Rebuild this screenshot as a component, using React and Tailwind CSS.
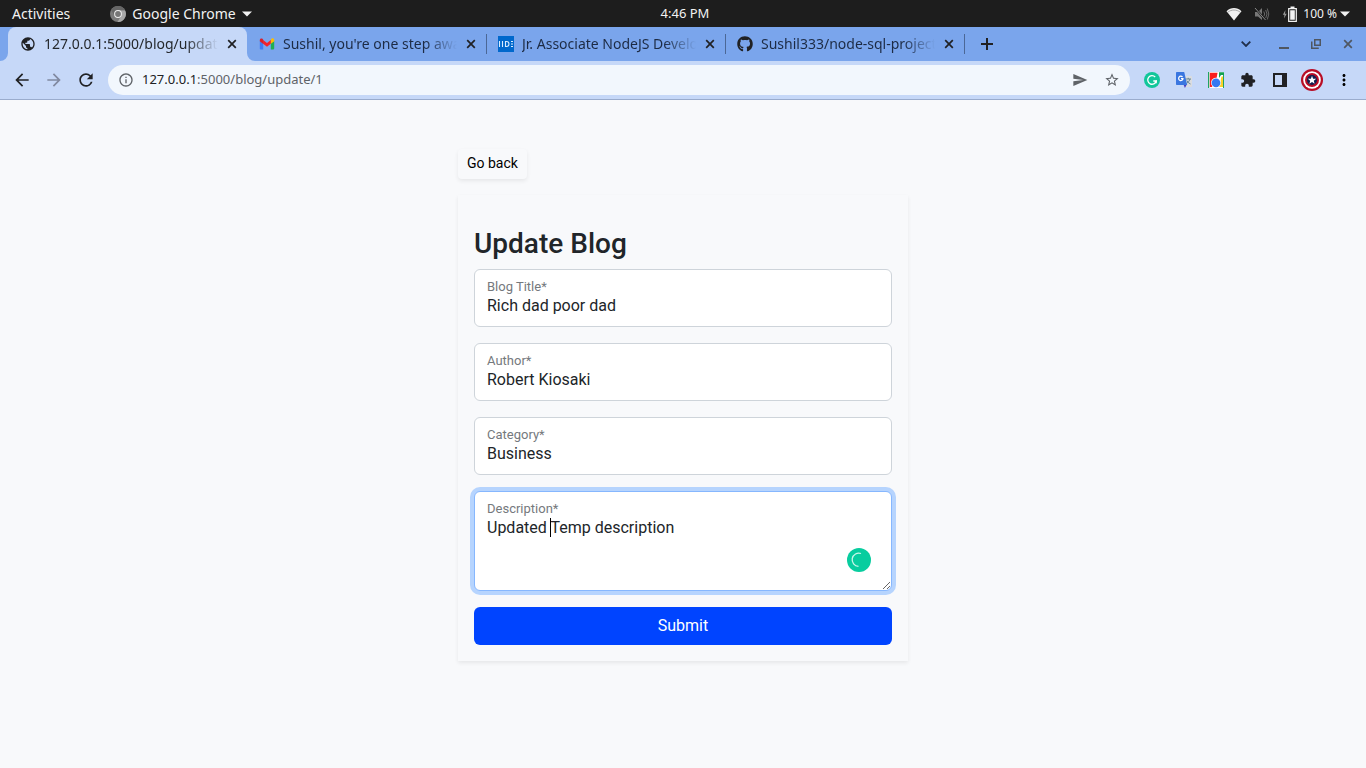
import React from "react";
import {
  MdArrowBack,
  MdArrowForward,
  MdRefresh,
  MdInfoOutline,
  MdSend,
  MdStarBorder,
  MdExtension,
  MdMoreVert,
  MdPublic,
} from "react-icons/md";
import { FaGithub } from "react-icons/fa";

function CloseGlyph({ className }) {
  return (
    <svg viewBox="0 0 10 10" className={className} aria-hidden="true">
      <path d="M1.2 1.2 8.8 8.8M8.8 1.2 1.2 8.8" stroke="currentColor" strokeWidth="1.7" fill="none" />
    </svg>
  );
}

function GmailIcon() {
  return (
    <svg viewBox="0 0 16 16" className="size-4">
      <path d="M.8 5v7.600c0 .5.4.9.900.9h2.500V7z" fill="#3f7cf4" />
      <path d="M11.800 7v6.500h2.500c.5 0 .9-.4.9-.9V5z" fill="#1fae54" />
      <path d="M11.600 4.200v3.700l3.600-2.700V4c0-1.500-1.600-2.200-2.700-1.300z" fill="#fbbc04" />
      <path d="M4.100 7.700V3.900L8 6.900l3.800-3v3.800L8 10.800z" fill="#f2212b" />
      <path d="M.8 4v1.200l3.500 2.700V4l-.8-1.200C2.400 1.900.8 2.500.8 4z" fill="#d9202b" />
    </svg>
  );
}

function IideIcon() {
  return (
    <svg viewBox="0 0 16 16" className="size-4">
      <rect width="16" height="16" fill="#0068cc" />
      <path
        d="M1.500 5v6M4.500 5v6M7.500 5.500v5h1c1.600 0 2.500-1 2.500-2.500s-.9-2.500-2.500-2.500zM13 5.500H15M13 8H15M13 10.500H15"
        stroke="#d9ecff"
        strokeWidth="1.100"
        fill="none"
      />
    </svg>
  );
}

const tabs = [
  { title: "127.0.0.1:5000/blog/update/1", icon: <MdPublic className="size-4" />, active: true },
  { title: "Sushil, you're one step away from", icon: <GmailIcon /> },
  { title: "Jr. Associate NodeJS Developer", icon: <IideIcon /> },
  { title: "Sushil333/node-sql-project-api", icon: <FaGithub className="size-4" /> },
];

function ChromeMark() {
  return (
    <svg viewBox="0 0 16 16" className="size-4">
      <circle cx="8" cy="8" r="8" fill="#7b7b7b" />
      <path d="M8 4.200h6.900A8 8 0 0 1 7.500 16l3.800-6z" fill="#a9a9a9" />
      <path d="M1.100 4A8 8 0 0 1 15 4.200H8L4.600 9.800z" fill="#666" />
      <circle cx="8" cy="8" r="3.900" fill="#f0f0f0" />
      <circle cx="8" cy="8" r="2.900" fill="#777" />
    </svg>
  );
}

function Caret() {
  return (
    <svg viewBox="0 0 10 6" className="h-[6px] w-[10px]">
      <path d="M0 .5h10L5 5.500z" fill="#f2f2f2" />
    </svg>
  );
}

function SystemBar() {
  return (
    <header className="grid h-[27px] grid-cols-[1fr_auto_1fr] items-center bg-[#1d1d1d] text-[13px] text-[#f2f2f2]">
      <div className="flex items-center gap-10 pl-3">
        <button className="text-sm">Activities</button>
        <button className="flex items-center gap-[6px] text-sm">
          <ChromeMark />
          <span>Google Chrome</span>
          <Caret />
        </button>
      </div>
      <time className="pl-1">4:46 PM</time>
      <div className="flex items-center justify-end pr-4">
        <svg viewBox="0 0 16 14" className="mr-3 h-[14px] w-4">
          <path d="M.5 4.200C4.800 0 11.200 0 15.500 4.200L8 13.500z" fill="#f2f2f2" />
          <path d="M1.800 5.200C5.500 2.300 10.500 2.300 14.200 5.200" stroke="#8a8a8a" strokeWidth=".7" fill="none" />
        </svg>
        <svg viewBox="0 0 16 14" className="mr-3 h-[14px] w-4">
          <path d="M1 5h3l4-4v12L4 9.500H1z" fill="#777" />
          <path d="M9.800 4.500q1.800 2.500 0 5M11.700 3q2.600 4 0 8M13.300 1.500q3 5.500 0 11" stroke="#666" strokeWidth="1" fill="none" />
          <path d="M1.500 1.500 11 12.500" stroke="#1d1d1d" strokeWidth="2" />
          <path d="M1 1l10.500 12" stroke="#888" strokeWidth="1" />
        </svg>
        <svg viewBox="0 0 15 16" className="mr-[6px] h-4 w-[15px]">
          <path d="M3.500 4 .8 8.700h1.700L2 12.500l2.700-4.800H3z" fill="#999" />
          <path d="M6.700 2.700h7.600v12.600H6.700z" stroke="#f2f2f2" strokeWidth="1.200" fill="none" />
          <path d="M8.200 4.200h4.600v9.600H8.200zM8.500.5h4v2h-4z" fill="#f2f2f2" />
        </svg>
        <span className="mr-[3px] text-xs">100 %</span>
        <Caret />
      </div>
    </header>
  );
}

function Tab({ tab }) {
  return (
    <div
      className={
        "relative flex h-full min-w-0 max-w-[239px] flex-1 items-center pl-3 pr-[7px] " +
        (tab.active ? "rounded-t-lg bg-[#c6d8f8]" : "")
      }
    >
      <span className="mr-2 shrink-0 text-[#202124]">{tab.icon}</span>
      <button
        className={
          "min-w-0 flex-1 overflow-hidden text-left text-sm whitespace-nowrap [mask-image:linear-gradient(to_right,black_calc(100%-32px),transparent)] " +
          (tab.active ? "text-[#25282c]" : "text-[#1d2b44]")
        }
      >
        {tab.title}
      </button>
      <button aria-label="Close tab" className="ml-[6px] flex size-4 shrink-0 items-center justify-center text-[#202124]">
        <CloseGlyph className="size-[10px]" />
      </button>
      {tab.active ? (
        <>
          <svg viewBox="0 0 8 8" className="absolute bottom-0 -left-2 size-2">
            <path d="M8 0v8H0a8 8 0 0 0 8-8z" fill="#c6d8f8" />
          </svg>
          <svg viewBox="0 0 8 8" className="absolute -right-2 bottom-0 size-2">
            <path d="M0 0v8h8a8 8 0 0 1-8-8z" fill="#c6d8f8" />
          </svg>
        </>
      ) : (
        <span className="absolute top-[7px] -right-px h-5 w-px bg-[#4b6796]" />
      )}
    </div>
  );
}

function TabStrip() {
  return (
    <div className="flex h-[34px] items-center bg-[#7aa5ec] pl-2">
      {tabs.map((tab) => (
        <Tab key={tab.title} tab={tab} />
      ))}
      <button aria-label="New tab" className="ml-[17px] shrink-0 text-[#202124]">
        <svg viewBox="0 0 12 12" className="size-3">
          <path d="M6 0v12M0 6h12" stroke="currentColor" strokeWidth="2" />
        </svg>
      </button>
      <div className="ml-auto flex shrink-0 items-center gap-[22px] pr-[13px] text-[#4f5661]">
        <button aria-label="Search tabs" className="mr-[6px] text-[#202f4a]">
          <svg viewBox="0 0 10 6" className="h-[6px] w-[10px]">
            <path d="M.7.700 5 5 9.300.700" stroke="currentColor" strokeWidth="1.800" fill="none" />
          </svg>
        </button>
        <button aria-label="Minimize">
          <svg viewBox="0 0 10 10" className="size-[10px]">
            <path d="M0 9h10" stroke="currentColor" strokeWidth="2" />
          </svg>
        </button>
        <button aria-label="Restore">
          <svg viewBox="0 0 10 10" className="size-[10px]">
            <path d="M3.750.750h5.500v5.500h-5.500z" stroke="currentColor" strokeWidth="1.500" fill="none" />
            <path d="M.750 2.500v6.750h7" stroke="currentColor" strokeWidth="1.500" fill="none" />
          </svg>
        </button>
        <button aria-label="Close window">
          <CloseGlyph className="size-[10px]" />
        </button>
      </div>
    </div>
  );
}

function GrammarlyIcon() {
  return (
    <svg viewBox="0 0 16 16" className="size-4">
      <circle cx="8" cy="8" r="8" fill="#11c69a" />
      <path d="M11.200 5A4.300 4.300 0 1 0 12.200 9H9.300" stroke="#fff" strokeWidth="1.300" fill="none" />
      <path d="M12.300 8.300v3" stroke="#fff" strokeWidth="1" />
    </svg>
  );
}

function TranslateIcon() {
  return (
    <svg viewBox="0 0 16 16" className="size-4">
      <path d="M6 4h9.300c.4 0 .7.300.7.700v9.600c0 .4-.3.700-.7.700H9z" fill="#dadce0" />
      <path d="M9.500 7h5.500M12.200 5.800V7M14 7q-.8 3-3.500 4.500M10.800 8.500q1.200 2.500 3.700 3.500" stroke="#5f7f8c" strokeWidth=".9" fill="none" />
      <path d="M7.500 12.500h3.300L8.900 16z" fill="#4a3fc0" />
      <path d="M.7 0h7.500l3 13H.7c-.4 0-.7-.3-.7-.7V.700C0 .300.300 0 .700 0z" fill="#3a76e0" />
      <path d="M6.500 5A2.200 2.200 0 1 0 7 6.700H5" stroke="#fff" strokeWidth="1.200" fill="none" />
    </svg>
  );
}

function PickerIcon() {
  return (
    <svg viewBox="0 0 16 16" className="size-4">
      <path d="M0 0h16v16H0z" fill="#fff" />
      <path d="M0 0h1.200v16H0z" fill="#1fa463" />
      <path d="M1.800.8h8L8 8 4 15H1.800z" fill="#fb1d1d" />
      <path d="M10.800.3H16V3h-3l-2 3z" fill="#12a150" />
      <path d="M13.500 4.500H15V15h-4z" fill="#fbd22a" />
      <path d="M15 3h1v13h-1z" fill="#1fa463" />
      <path d="M9.800 0h1v5l-1.300-1z" fill="#fff" />
      <circle cx="8" cy="10.800" r="5" fill="#fff" />
      <circle cx="8" cy="10.800" r="4.400" fill="#3478f0" />
    </svg>
  );
}

function ShieldAvatar() {
  return (
    <svg viewBox="0 0 22 22" className="size-[22px]">
      <circle cx="11" cy="11" r="11" fill="#b80d25" />
      <circle cx="11" cy="11" r="8.800" fill="#fff" />
      <circle cx="11" cy="11" r="7" fill="#b80d25" />
      <circle cx="11" cy="11" r="5" fill="#10204f" />
      <path d="m11 6.800 1.100 2.900 3.100.100-2.400 1.900.8 3L11 13l-2.600 1.700.8-3-2.400-1.900 3.100-.1z" fill="#fff" />
    </svg>
  );
}

function Toolbar() {
  return (
    <div className="flex h-[39px] items-center border-b border-[#9aaccd] bg-[#c6d8f8] pr-[13px] pl-3">
      <div className="flex items-center gap-3 text-[#202124]">
        <button aria-label="Back">
          <MdArrowBack className="size-5" />
        </button>
        <button aria-label="Forward" className="text-[#8089a0]">
          <MdArrowForward className="size-5" />
        </button>
        <button aria-label="Reload">
          <MdRefresh className="size-5" />
        </button>
      </div>
      <div className="ml-3 flex h-[30px] min-w-0 flex-1 items-center rounded-full bg-[#f2f7fd] px-[10px] text-[#5f6368]">
        <MdInfoOutline className="size-4 shrink-0" />
        <a href="#top" className="ml-2 flex-1 text-[13px]">
          <span className="text-[#202124]">127.0.0.1</span>:5000/blog/update/1
        </a>
        <button aria-label="Share">
          <MdSend className="size-4" />
        </button>
        <button aria-label="Bookmark this page" className="ml-4">
          <MdStarBorder className="size-4" />
        </button>
      </div>
      <div className="ml-[14px] flex items-center gap-4 text-[#202124]">
        <button aria-label="Grammarly"><GrammarlyIcon /></button>
        <button aria-label="Translate"><TranslateIcon /></button>
        <button aria-label="Color picker"><PickerIcon /></button>
        <button aria-label="Extensions"><MdExtension className="size-4" /></button>
        <button aria-label="Side panel">
          <svg viewBox="0 0 16 16" className="size-4">
            <path d="M1 1h14v14H1zM3 3v10h7V3z" fill="currentColor" fillRule="evenodd" />
          </svg>
        </button>
      </div>
      <button aria-label="Profile" className="ml-[13px]"><ShieldAvatar /></button>
      <button aria-label="Menu" className="ml-[12px]"><MdMoreVert className="size-[18px]" /></button>
    </div>
  );
}

function Field({ id, label, value }) {
  return (
    <div className="relative">
      <label htmlFor={id} className="absolute top-2 left-[13px] text-[13px] leading-5 text-[#75797d]">
        {label}
      </label>
      <input
        id={id}
        type="text"
        defaultValue={value}
        className="block h-[58px] w-full rounded-md border border-[#ced4da] bg-white px-3 pt-6 pb-[10px] text-base text-[#212529] outline-none"
      />
    </div>
  );
}

function UpdateBlogPage() {
  return (
    <main className="flex-1 bg-[#f8f9fb] px-4 pt-[49px] pb-12 font-[Roboto,sans-serif] text-[#212529]">
      <div className="mx-auto max-w-[450px]">
        <button className="block rounded bg-[#f8f9fb] px-[9px] pt-1 pb-[6px] text-sm text-black shadow-[0_2px_4px_rgba(0,0,0,0.075)]">
          Go back
        </button>
        <form
          onSubmit={(event) => event.preventDefault()}
          className="mt-4 flex flex-col gap-4 p-4 pt-8 shadow-[0_2px_4px_rgba(0,0,0,0.075)]"
        >
          <h1 className="-mb-2 text-[28px] leading-[34px] font-medium">Update Blog</h1>
          <Field id="title" label="Blog Title*" value="Rich dad poor dad" />
          <Field id="author" label="Author*" value="Robert Kiosaki" />
          <Field id="category" label="Category*" value="Business" />
          <div className="relative">
            <label htmlFor="description" className="absolute top-2 left-[13px] text-[13px] leading-5 text-[#75797d]">
              Description*
            </label>
            <textarea
              id="description"
              defaultValue="Updated Temp description"
              className="block h-[100px] w-full resize-y rounded-md border border-[#86b7fe] bg-white px-3 pt-6 pb-2 text-base text-[#212529] ring-4 ring-[#b6d4fe] outline-none"
            />
            <span className="absolute top-[27px] left-[76px] h-[19px] w-px bg-black" />
            <svg viewBox="0 0 24 24" className="absolute right-[21px] bottom-[19px] size-6">
              <circle cx="12" cy="12" r="12" fill="#08cd9f" />
              <path d="M14 5.500A6.600 6.600 0 1 0 11.500 18.300" stroke="#c9f6ea" strokeWidth="1.300" fill="none" />
            </svg>
          </div>
          <button type="submit" className="h-[38px] rounded-md bg-[#0044ff] text-base text-white">
            Submit
          </button>
        </form>
      </div>
    </main>
  );
}

export default function App() {
  return (
    <div id="top" className="flex min-h-screen flex-col font-['Noto_Sans',sans-serif]">
      <SystemBar />
      <TabStrip />
      <Toolbar />
      <UpdateBlogPage />
    </div>
  );
}
